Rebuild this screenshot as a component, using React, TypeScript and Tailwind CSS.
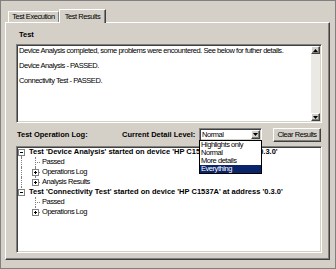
import React from 'react'

const sunken =
  'border border-t-[#808080] border-l-[#808080] border-r-white border-b-white shadow-[inset_1px_1px_0_#404040,inset_-1px_-1px_0_#d4d0c8]'
const raised =
  'border border-t-white border-l-white border-r-[#404040] border-b-[#404040] shadow-[inset_-1px_-1px_0_#808080]'

type Line = 'none' | 'full' | 'top' | 'bottom'

interface TreeRow {
  label: string
  root?: boolean
  box?: 'open' | 'closed'
  a: Line
  b: Line
}

const rows: TreeRow[] = [
  { label: "Test 'Device Analysis' started on device 'HP C1537A' at address '0.3.0'", root: true, box: 'open', a: 'bottom', b: 'none' },
  { label: 'Passed', a: 'full', b: 'full' },
  { label: 'Operations Log', box: 'closed', a: 'full', b: 'full' },
  { label: 'Analysis Results', box: 'closed', a: 'full', b: 'top' },
  { label: "Test 'Connectivity Test' started on device 'HP C1537A' at address '0.3.0'", root: true, box: 'open', a: 'top', b: 'none' },
  { label: 'Passed', a: 'none', b: 'full' },
  { label: 'Operations Log', box: 'closed', a: 'none', b: 'top' },
]

function PlusBox({ open }: { open: boolean }) {
  return (
    <span className="relative z-10 w-[7px] h-[7px] border border-[#808080] bg-white flex items-center justify-center">
      <span className="absolute w-[3px] h-px bg-black" />
      {!open && <span className="absolute w-px h-[3px] bg-black" />}
    </span>
  )
}

function VLine({ kind, left }: { kind: Line; left: string }) {
  if (kind === 'none') return null
  const pos =
    kind === 'full' ? 'top-0 bottom-0' : kind === 'top' ? 'top-0 h-[5px]' : 'top-[5px] bottom-0'
  return <span className={`absolute ${left} ${pos} border-l border-dotted border-[#808080]`} />
}

function Arrow({ down }: { down?: boolean }) {
  return (
    <svg width="5" height="3" viewBox="0 0 5 3">
      <path d={down ? 'M0 0h5L2.5 3z' : 'M0 3h5L2.5 0z'} fill="#000" />
    </svg>
  )
}

export default function App() {
  return (
    <div className="relative w-[336px] h-[269px] bg-[#d4d0c8] border border-[#808080] flex flex-col pl-[4px] pr-[5px] pt-[8px] pb-[8px] font-['Liberation_Sans',Arial,sans-serif] text-[7.5px] tracking-[-0.45px] leading-[10px] text-black whitespace-nowrap overflow-hidden">
      {/* tabs */}
      <div className="flex items-end h-[13px] pl-[3px]">
        <div className="w-[51px] h-[11px] border-l border-t border-white border-r border-r-[#808080] flex items-center justify-center">
          Test Execution
        </div>
        <div className="relative z-10 -mb-px w-[47px] h-[14px] bg-[#d4d0c8] border-l border-t border-white border-r border-r-[#404040] shadow-[inset_-1px_0_0_#808080] flex items-center justify-center">
          Test Results
        </div>
      </div>

      {/* tab page */}
      <div className={`flex-1 flex flex-col ${raised} pl-[10px] pr-[7px] pb-[5px]`}>
        <div className="h-[21px] pl-[3px] pt-[7px] font-bold tracking-normal">Test</div>

        <div className={`h-[79px] ${sunken} bg-white flex`}>
          <div className="flex-1 flex flex-col gap-[5px] pl-[2px] pt-px">
            <div>Device Analysis completed, some problems were encountered. See below for futher details.</div>
            <div>Device Analysis - PASSED.</div>
            <div>Connectivity Test - PASSED.</div>
          </div>
          <div className="w-[9px] my-px mr-px flex flex-col bg-[#ebe9e4]">
            <div className={`h-[8px] ${raised} bg-[#d4d0c8] flex items-center justify-center`}>
              <Arrow />
            </div>
            <div className="flex-1" />
            <div className={`h-[8px] ${raised} bg-[#d4d0c8] flex items-center justify-center`}>
              <Arrow down />
            </div>
          </div>
        </div>

        <div className="h-[23px] flex items-center pl-px">
          <div className="w-[105px] font-bold tracking-normal">Test Operation Log:</div>
          <div className="w-[77px] font-bold tracking-normal">Current Detail Level:</div>
          <div className={`w-[63px] h-[13px] ${sunken} bg-white flex items-center`}>
            <span className="flex-1 pl-[2px]">Normal</span>
            <div className={`w-[9px] h-[9px] mr-px ${raised} bg-[#d4d0c8] flex items-center justify-center`}>
              <Arrow down />
            </div>
          </div>
          <div className={`ml-[11px] w-[48px] h-[14px] ${raised} bg-[#d4d0c8] flex items-center justify-center`}>
            Clear Results
          </div>
        </div>

        <div className={`h-[107px] ${sunken} bg-white pl-px overflow-hidden`}>
          {rows.map((r, i) => (
            <div key={i} className="flex h-[10px] items-center">
              <div className="relative w-[11px] h-full flex items-center">
                <VLine kind={r.a} left="left-[3px]" />
                {r.root && <PlusBox open />}
              </div>
              {r.root ? (
                <span className="font-bold tracking-normal">{r.label}</span>
              ) : (
                <>
                  <div className="relative w-[13px] h-full flex items-center pl-[3px]">
                    <VLine kind={r.b} left="left-[6px]" />
                    <span className="absolute left-[6px] top-[5px] w-[5px] border-t border-dotted border-[#808080]" />
                    {r.box && <PlusBox open={r.box === 'open'} />}
                  </div>
                  <span>{r.label}</span>
                </>
              )}
            </div>
          ))}
        </div>
      </div>

      {/* open dropdown list */}
      <div className="absolute left-[198px] top-[139px] w-[63px] h-[34px] border border-black bg-white flex flex-col">
        <div className="h-[8px] leading-[8px] pl-px">Highlights only</div>
        <div className="h-[8px] leading-[8px] pl-px">Normal</div>
        <div className="h-[8px] leading-[8px] pl-px">More details</div>
        <div className="h-[8px] leading-[8px] pl-px bg-[#0a246a] text-white">Everything</div>
      </div>
    </div>
  )
}
